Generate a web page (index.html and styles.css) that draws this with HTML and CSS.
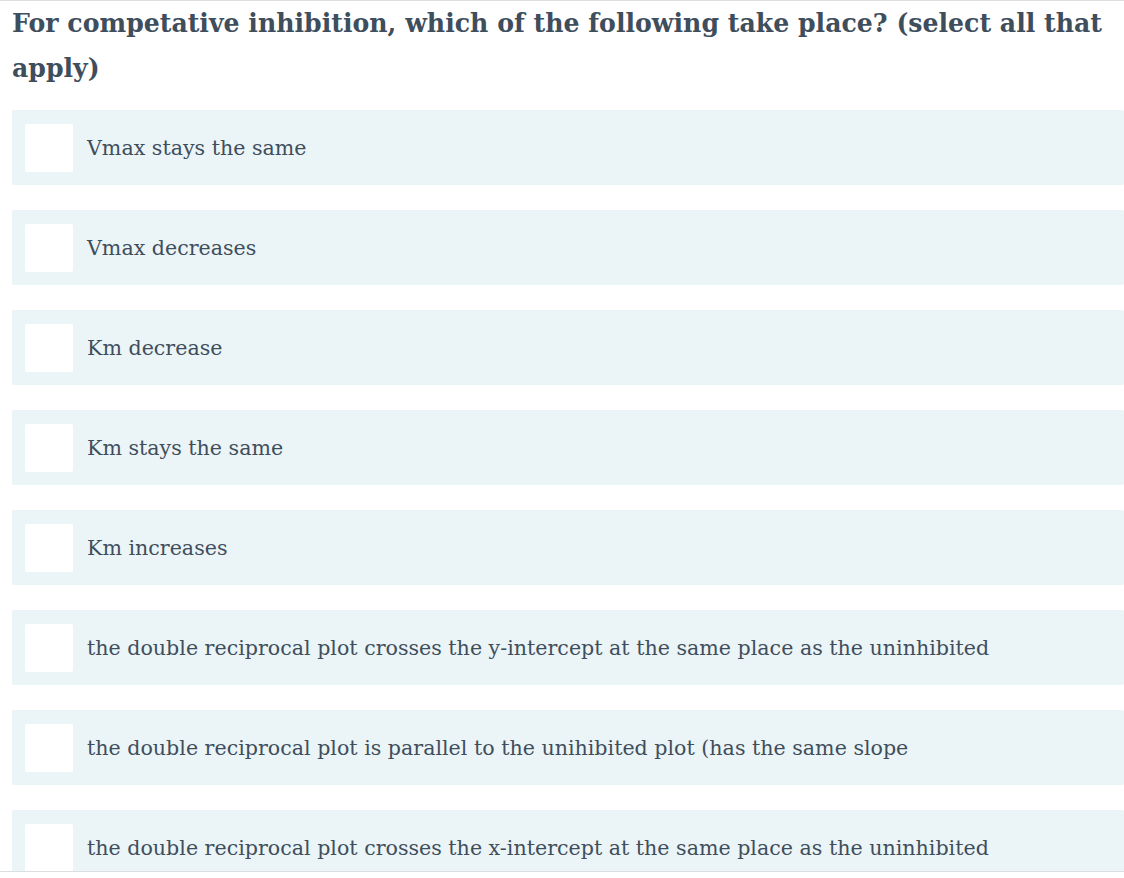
FILE: index.html
```html
<!DOCTYPE html>
<html>
<head>
<meta charset="utf-8">
<link rel="stylesheet" href="styles.css">
</head>
<body>
<div class="frame">
  <h1 class="question">For competative inhibition, which of the following take place? (select all that apply)</h1>
  <div class="options">
    <label class="option"><span class="box"></span><span class="label">Vmax stays the same</span></label>
    <label class="option"><span class="box"></span><span class="label">Vmax decreases</span></label>
    <label class="option"><span class="box"></span><span class="label">Km decrease</span></label>
    <label class="option"><span class="box"></span><span class="label">Km stays the same</span></label>
    <label class="option"><span class="box"></span><span class="label">Km increases</span></label>
    <label class="option"><span class="box"></span><span class="label">the double reciprocal plot crosses the y-intercept at the same place as the uninhibited</span></label>
    <label class="option"><span class="box"></span><span class="label">the double reciprocal plot is parallel to the unihibited plot (has the same slope</span></label>
    <label class="option"><span class="box"></span><span class="label">the double reciprocal plot crosses the x-intercept at the same place as the uninhibited</span></label>
  </div>
</div>
</body>
</html>
```
FILE: styles.css
```css
html, body {
  margin: 0;
  padding: 0;
  background: #ffffff;
}
.frame {
  height: 870px;
  overflow: hidden;
  border-top: 1px solid #dcdfe2;
  border-bottom: 1px solid #dcdfe2;
  box-sizing: content-box;
  font-family: "DejaVu Serif", "Liberation Serif", serif;
  color: #3f4e5c;
}
.question {
  margin: 0;
  padding: 0 12px;
  font-size: 25.2px;
  font-weight: bold;
  line-height: 45px;
}
.options {
  display: flex;
  flex-direction: column;
  gap: 25px;
  margin-top: 19px;
  padding-left: 12px;
}
.option {
  display: flex;
  align-items: center;
  gap: 14px;
  height: 75px;
  padding-left: 13px;
  background: #ebf4f6;
  border-radius: 2px;
}
.box {
  flex: none;
  width: 48px;
  height: 48px;
  background: #ffffff;
  border-radius: 2px;
}
.label {
  font-size: 20.6px;
}
```
